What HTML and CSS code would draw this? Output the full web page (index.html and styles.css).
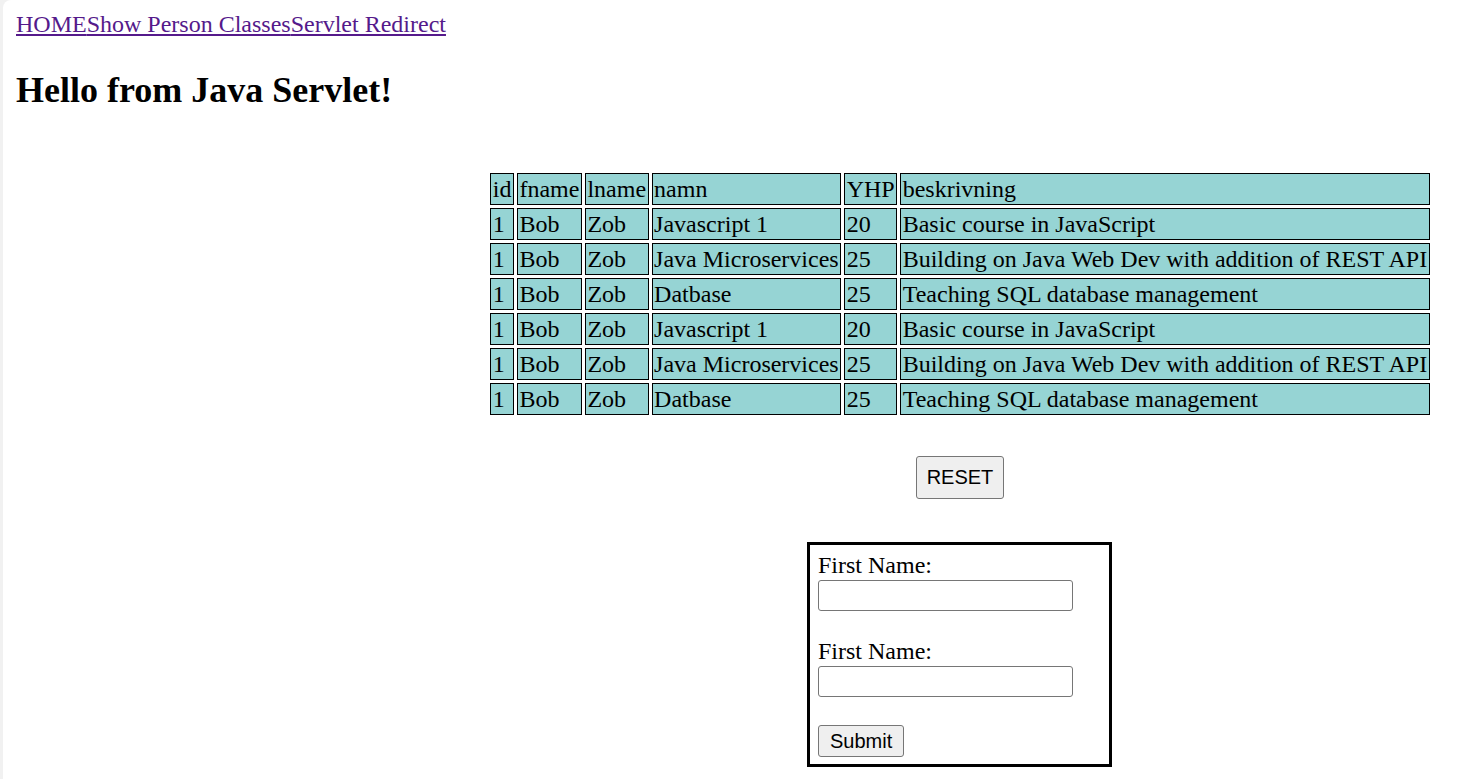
FILE: index.html
```html
<!DOCTYPE html>
<html lang="en">
<head>
<meta charset="utf-8">
<title>Hello from Java Servlet</title>
<link rel="stylesheet" href="styles.css">
</head>
<body>
<div class="page">
  <nav class="nav"><a href="#">HOME</a><a href="#">Show Person Classes</a><a href="#">Servlet Redirect</a></nav>
  <section class="intro">
    <h1 class="title">Hello from Java Servlet!</h1>
  </section>
  <main class="main">
    <table class="courses">
      <thead>
        <tr><td>id</td><td>fname</td><td>lname</td><td>namn</td><td>YHP</td><td>beskrivning</td></tr>
      </thead>
      <tbody>
        <tr><td>1</td><td>Bob</td><td>Zob</td><td>Javascript 1</td><td>20</td><td>Basic course in JavaScript</td></tr>
        <tr><td>1</td><td>Bob</td><td>Zob</td><td>Java Microservices</td><td>25</td><td>Building on Java Web Dev with addition of REST API</td></tr>
        <tr><td>1</td><td>Bob</td><td>Zob</td><td>Datbase</td><td>25</td><td>Teaching SQL database management</td></tr>
        <tr><td>1</td><td>Bob</td><td>Zob</td><td>Javascript 1</td><td>20</td><td>Basic course in JavaScript</td></tr>
        <tr><td>1</td><td>Bob</td><td>Zob</td><td>Java Microservices</td><td>25</td><td>Building on Java Web Dev with addition of REST API</td></tr>
        <tr><td>1</td><td>Bob</td><td>Zob</td><td>Datbase</td><td>25</td><td>Teaching SQL database management</td></tr>
      </tbody>
    </table>
    <button class="btn reset" type="button">RESET</button>
    <form class="person-form">
      <label class="field-label" for="fn1">First Name:</label>
      <input class="field-input" id="fn1" type="text">
      <label class="field-label second" for="fn2">First Name:</label>
      <input class="field-input" id="fn2" type="text">
      <button class="btn submit" type="submit">Submit</button>
    </form>
  </main>
</div>
</body>
</html>
```

FILE: styles.css
```css
html {
  background: #f1f1f1;
}

body {
  margin: 0;
  font-family: "Liberation Serif", "Times New Roman", serif;
  font-size: 24px;
  color: #000;
}

.page {
  margin-left: 3px;
  min-height: 100vh;
  background: #fff;
  border-top-left-radius: 8px;
  padding: 11px 0 0 13px;
  box-sizing: border-box;
}

.nav {
  line-height: 27px;
}

.nav a {
  color: #551a8b;
  text-decoration: underline;
}

.intro {
  margin: 0;
}

.title {
  font-size: 36px;
  font-weight: bold;
  line-height: 40px;
  margin: 32px 0 30px 0;
}

.main {
  margin-left: 430px;
  margin-top: 60px;
  display: flex;
  flex-direction: column;
  align-items: center;
}

.courses {
  border-collapse: separate;
  border-spacing: 3px;
}

.courses td {
  background: #96d4d4;
  border: 1px solid #000;
  padding: 2px 1.5px;
  line-height: 26px;
  white-space: nowrap;
  text-align: left;
}

.btn {
  font-family: "Liberation Sans", Arial, sans-serif;
  font-size: 20px;
  line-height: 23px;
  color: #000;
  background: #efefef;
  border: 1px solid #767676;
  border-radius: 3px;
}

.reset {
  margin-top: 38px;
  padding: 9px 10px;
}

.person-form {
  margin-top: 43px;
  margin-left: -1px;
  width: 305px;
  box-sizing: border-box;
  border: 3px solid #000;
  padding: 7px 8px 7px 8px;
  display: flex;
  flex-direction: column;
  align-items: flex-start;
}

.field-label {
  line-height: 27px;
}

.field-label.second {
  margin-top: 27px;
}

.field-input {
  margin-top: 1px;
  margin-left: 0;
  width: 255px;
  height: 31px;
  box-sizing: border-box;
  border: 1px solid #767676;
  border-radius: 3px;
  background: #fff;
  padding: 1px 3px;
  font-family: "Liberation Sans", Arial, sans-serif;
  font-size: 20px;
}

.submit {
  margin-top: 28px;
  padding: 4px 11px 3px 11px;
}
```
